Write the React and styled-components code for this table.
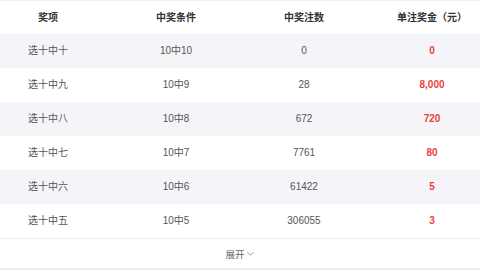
import React from 'react';
import styled, { createGlobalStyle } from 'styled-components';

const GlobalStyle = createGlobalStyle`
    html, body {
        margin: 0;
        padding: 0;
        background: #fff;
        overflow: hidden;
    }
    body {
        font-family: 'Liberation Sans', 'Noto Sans CJK SC', sans-serif;
    }
`;

const Wrap = styled.div`
    width: 480px;
    height: 270px;
    overflow: hidden;
    border-top: 1px solid #f0f0f2;
    box-sizing: border-box;
`;

const Table = styled.div`
    margin: 0 -16px;
`;

const Row = styled.div`
    display: grid;
    grid-template-columns: repeat(4, 1fr);
    align-items: center;
    height: ${p => (p.$head ? '33px' : '34px')};
    background-color: ${p => (p.$striped ? '#f5f5f9' : '#fff')};
`;

const Cell = styled.div`
    text-align: center;
    font-size: 10px;
    line-height: 14px;
    color: ${p => (p.$red ? '#e8413f' : p.$head ? '#333' : '#555')};
    font-weight: ${p => (p.$red || p.$head ? 700 : 400)};
`;

const More = styled.div`
    display: flex;
    align-items: center;
    justify-content: center;
    gap: 1px;
    height: 29px;
    border-top: 1px solid #ececf0;
    border-bottom: 2px solid #ececf0;
    font-size: 9.5px;
    color: #666;
    cursor: pointer;
`;

const rows = [
    ['选十中十', '10中10', '0', '0'],
    ['选十中九', '10中9', '28', '8,000'],
    ['选十中八', '10中8', '672', '720'],
    ['选十中七', '10中7', '7761', '80'],
    ['选十中六', '10中6', '61422', '5'],
    ['选十中五', '10中5', '306055', '3'],
];

const App = () => {
    return (
        <Wrap>
            <GlobalStyle />
            <Table>
                <Row $head>
                    <Cell $head>奖项</Cell>
                    <Cell $head>中奖条件</Cell>
                    <Cell $head>中奖注数</Cell>
                    <Cell $head>单注奖金（元）</Cell>
                </Row>
                {rows.map((r, i) => (
                    <Row key={r[0]} $striped={i % 2 === 0}>
                        <Cell>{r[0]}</Cell>
                        <Cell>{r[1]}</Cell>
                        <Cell>{r[2]}</Cell>
                        <Cell $red>{r[3]}</Cell>
                    </Row>
                ))}
            </Table>
            <More>
                展开
                <svg width='9' height='9' viewBox='0 0 10 10'>
                    <path d='M1.5 3.5 L5 7 L8.5 3.5' fill='none' stroke='#888' strokeWidth='0.9' />
                </svg>
            </More>
        </Wrap>
    );
};

export default App;
